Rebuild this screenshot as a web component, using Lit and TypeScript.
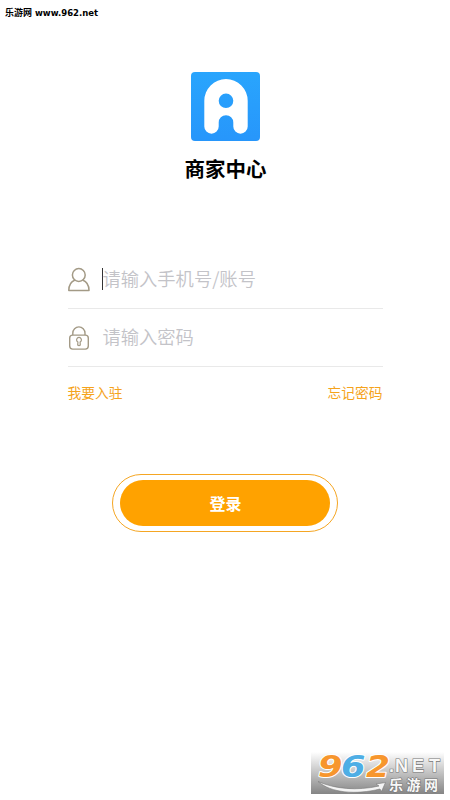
import { LitElement, html, css, svg } from "lit";
import { customElement } from "lit/decorators.js";

const userIcon = svg`<svg class="icon" width="24" height="28" viewBox="0 0 24 28" fill="none" stroke="#a39a86" stroke-width="1.5">
  <circle cx="10.8" cy="10" r="6.4"/>
  <path d="M7 15C2.8 16.6 .8 20.2 .8 25.6H21C21 20.2 18.8 16.6 14.6 15" stroke-linejoin="round"/>
</svg>`;

const lockIcon = svg`<svg class="icon" width="24" height="28" viewBox="0 0 24 28" fill="none" stroke="#a39a86" stroke-width="1.4">
  <rect x="1.7" y="12.1" width="18.6" height="14" rx="3"/>
  <path d="M4.8 12.1V10.3a6.1 6.4 0 0 1 12.2 0V12.1"/>
  <path d="M9.9 19a2.4 2.4 0 1 1 2.2 0L12.3 22q-1.3 1.1-2.6 0Z" stroke-width="1.2"/>
</svg>`;

@customElement("app-root")
export class AppRoot extends LitElement {
  static styles = css`
    :host {
      display: block;
      position: relative;
      width: 450px;
      height: 800px;
      overflow: hidden;
      background: #fff;
      color: #000;
      font-family: "Noto Sans CJK SC", sans-serif;
    }
    .source {
      position: absolute;
      left: 5px;
      top: 6px;
      font: bold 9px/14px "Noto Sans CJK SC", sans-serif;
      white-space: pre;
      display: flex;
      gap: 3px;
    }
    .url { font: bold 8.5px/14px "DejaVu Sans", sans-serif; }
    .page {
      display: flex;
      flex-direction: column;
      align-items: center;
      padding-top: 72px;
    }
    .logo { display: block; margin-left: 1px; }
    h1 {
      margin: 13px 0 0 1px;
      font-size: 20.5px;
      line-height: 29px;
      font-weight: 700;
    }
    .form { width: 315px; margin-top: 67px; }
    .row {
      display: flex;
      align-items: center;
      height: 57.5px;
      border-bottom: 1px solid #e9e9e9;
      font-size: 18.3px;
      line-height: 26px;
      font-weight: 350;
      color: #c3c3c8;
    }
    .hint { padding-bottom: 2px; }
    .icon { flex: none; display: block; }
    .caret { width: 1px; height: 22px; margin-left: 10px; background: #333; }
    .caret.off { background: none; }
    .links {
      display: flex;
      justify-content: space-between;
      margin-top: 15px;
      font-size: 13.75px;
      line-height: 20px;
      color: #f5a31c;
    }
    .ring {
      box-sizing: border-box;
      width: 226px;
      height: 58px;
      margin-top: 72px;
      padding: 5px 7px;
      border: 1.4px solid #f5a623;
      border-radius: 29px;
    }
    .login {
      display: block;
      width: 100%;
      height: 46px;
      border: 0;
      border-radius: 23px;
      background: #ffa200;
      color: #fff;
      font: bold 16px/46px "Noto Sans CJK SC", sans-serif;
      padding: 0 0 0 1px;
    }
    .mark { position: absolute; left: 311px; top: 752px; overflow: visible; }
    .digits { font: italic bold 31px "DejaVu Sans", sans-serif; }
    .net { font: bold 18px "Liberation Sans", sans-serif; }
    .site { font: bold 14px "Noto Sans CJK SC", sans-serif; }
  `;

  render() {
    return html`
      <div class="source"><span>乐游网</span><span class="url">www.962.net</span></div>
      <main class="page">
        <svg class="logo" width="69" height="69" viewBox="0 0 69 69">
          <defs>
            <linearGradient id="blue" x1="0" y1="0" x2="0" y2="1">
              <stop offset="0" stop-color="#29a5fd"/>
              <stop offset="1" stop-color="#2796fb"/>
            </linearGradient>
          </defs>
          <rect width="69" height="69" rx="4" fill="url(#blue)"/>
          <path fill="#fff" fill-rule="evenodd" d="M13.3 28.8a21.7 21.7 0 0 1 43.4 0V54.5a7.2 7.2 0 0 1-14.4 0V50.5a7.3 7.3 0 0 0-14.6 0V54.5a7.2 7.2 0 0 1-14.4 0ZM42.3 28.8a7.3 7.3 0 1 0-14.6 0a7.3 7.3 0 1 0 14.6 0Z"/>
        </svg>
        <h1>商家中心</h1>
        <section class="form">
          <div class="row">${userIcon}<span class="caret"></span><span class="hint">请输入手机号/账号</span></div>
          <div class="row">${lockIcon}<span class="caret off"></span><span class="hint">请输入密码</span></div>
          <div class="links"><span>我要入驻</span><span>忘记密码</span></div>
        </section>
        <div class="ring"><button class="login">登录</button></div>
      </main>
      <svg class="mark" width="133" height="42" viewBox="0 0 133 42">
        <defs>
          <linearGradient id="gray" x1="0" y1="0" x2="0" y2="1">
            <stop offset="0" stop-color="#fff"/>
            <stop offset="0.5" stop-color="#c2c2c2"/>
            <stop offset="1" stop-color="#858585"/>
          </linearGradient>
        </defs>
        <rect width="133" height="42" fill="url(#gray)"/>
        <path d="M7 29.5C24 37 46 39 68 34L65 32L74.5 30.5L70.5 39.5L69 37C45 43 20 41 7 29.5Z" fill="#f4f4f4" stroke="#777" stroke-width=".6"/>
        <g class="digits" stroke="#fff" stroke-width="2" paint-order="stroke" stroke-linejoin="round">
          <text x="7" y="25" fill="#f7962d" textLength="24.5" lengthAdjust="spacingAndGlyphs">9</text>
          <text x="30" y="25" fill="#4eaee5" textLength="24.5" lengthAdjust="spacingAndGlyphs">6</text>
          <text x="55" y="25" fill="#f7962d" textLength="24" lengthAdjust="spacingAndGlyphs">2</text>
        </g>
        <g fill="#f8f8f8" stroke="#777" stroke-width="1.2" paint-order="stroke">
          <text class="net" x="78" y="19.5"><tspan>.</tspan><tspan x="84">N</tspan><tspan x="101">E</tspan><tspan x="118">T</tspan></text>
          <text class="site" x="78" y="37.5" textLength="49" lengthAdjust="spacing">乐游网</text>
        </g>
      </svg>
    `;
  }
}
